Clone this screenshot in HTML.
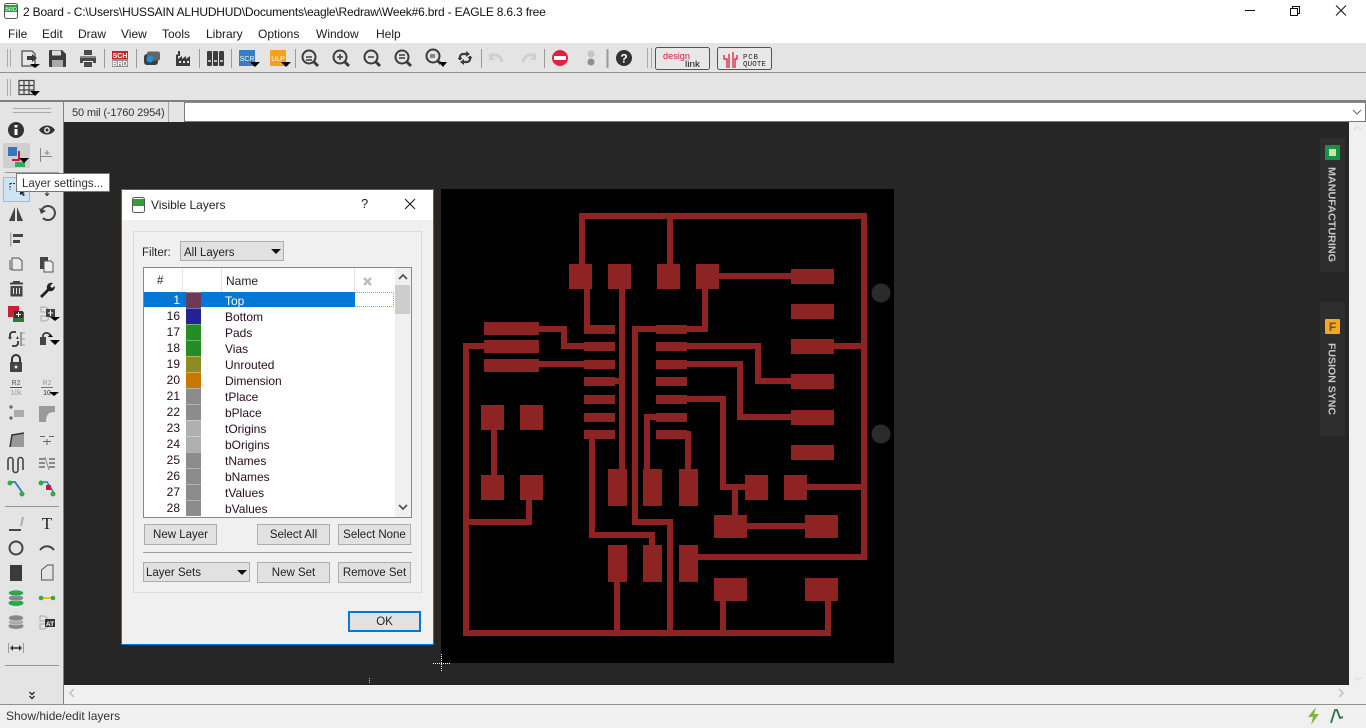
<!DOCTYPE html>
<html><head><meta charset="utf-8"><title>EAGLE</title>
<style>
html,body{margin:0;padding:0;width:1366px;height:728px;overflow:hidden;background:#262626;font-family:"Liberation Sans",sans-serif;font-size:12px;color:#1a1a1a}
.a{position:absolute;box-sizing:border-box}
.t{position:absolute;white-space:nowrap;line-height:16px}
.btn{position:absolute;box-sizing:border-box;background:#e1e1e1;border:1px solid #adadad;text-align:center;line-height:21px;font-size:11.5px;color:#222}
.row{position:absolute;left:144px;width:250px;height:16px;line-height:17px;font-size:12px;color:#2a0a20}
.n{position:absolute;right:214px;top:0}
.s{position:absolute;left:42px;width:15px;height:15px;top:0;border-top:1px solid rgba(255,255,255,.35)}
.l{position:absolute;left:81px;top:1px}
svg{position:absolute;left:0;top:0}
</style></head><body>
<!-- Chrome backgrounds -->
<div class="a" style="left:0;top:0;width:1366px;height:43px;background:#fff"></div>
<div class="a" style="left:0;top:43px;width:1366px;height:30px;background:#e4e4e4;border-bottom:1px solid #8f8f8f"></div>
<div class="a" style="left:0;top:73px;width:1366px;height:29px;background:#e4e4e4;border-bottom:2px solid #7f7f7f"></div>
<div class="a" style="left:0;top:102px;width:64px;height:603px;background:#e4e4e4;border-right:1px solid #7f7f7f"></div>
<div class="a" style="left:64px;top:102px;width:1302px;height:20px;background:#e4e4e4"></div>
<div class="a" style="left:64px;top:102px;width:105px;height:20px;border-right:1px solid #a8a8a8;"></div>
<div class="a" style="left:184px;top:102px;width:1182px;height:20px;background:#fff;border:1px solid #7a7a7a;border-top:1px solid #8a8a8a"></div>
<div class="a" style="left:1349px;top:122px;width:17px;height:563px;background:#f0f0f0"></div>
<div class="a" style="left:64px;top:685px;width:1302px;height:20px;background:#f0f0f0"></div>
<div class="a" style="left:0;top:704px;width:1366px;height:24px;background:#f0f0f0;border-top:1px solid #8f8f8f"></div>

<!-- Titlebar + menu text -->
<div class="t" style="left:23px;top:4px;font-size:12px;letter-spacing:-.19px;color:#111">2 Board - C:\Users\HUSSAIN ALHUDHUD\Documents\eagle\Redraw\Week#6.brd - EAGLE 8.6.3 free</div>
<div class="t" style="left:8px;top:26px">File</div>
<div class="t" style="left:42px;top:26px">Edit</div>
<div class="t" style="left:78px;top:26px">Draw</div>
<div class="t" style="left:121px;top:26px">View</div>
<div class="t" style="left:162px;top:26px">Tools</div>
<div class="t" style="left:206px;top:26px">Library</div>
<div class="t" style="left:258px;top:26px">Options</div>
<div class="t" style="left:316px;top:26px">Window</div>
<div class="t" style="left:376px;top:26px">Help</div>
<div class="t" style="left:72px;top:105px;font-size:11px;letter-spacing:-.15px;color:#333">50 mil (-1760 2954)</div>
<div class="t" style="left:6px;top:708px;color:#333;font-size:12px">Show/hide/edit layers</div>

<!-- Main SVG: PCB and icons -->
<svg width="1366" height="728" viewBox="0 0 1366 728" font-family="'Liberation Sans',sans-serif">
<!-- PCB -->
<rect x="441" y="189" width="453" height="474" fill="#000"/>
<circle cx="881" cy="293" r="9.5" fill="#2b2b2b"/><circle cx="881" cy="434" r="9.5" fill="#2b2b2b"/>
<g shape-rendering="crispEdges">
<path fill="none" stroke="#8e2323" stroke-width="6" stroke-linecap="butt" stroke-linejoin="miter" d="M582 264V216H864V557H698M670 216V264M587 289V329M539 329H564V346H584M539 364H584M484 346H466V633H828V601M622 289V469M615 381H622M656 329H635V522H670V633M656 417H647V469M494 430V475M529 500V522H466M592 439V535H652V545M617 582V633M719 276H791M705 289V329H687M834 346H864M687 346H758V381H791M687 364H740V417H791M687 399H723V487H745M687 434H688V469M807 487H864M735 487V515M747 526H805M723 601V633"/>
<path fill="#8e2323" d="M569 264h23v25h-23zM608 264h23v25h-23zM657 264h23v25h-23zM696 264h23v25h-23zM584 325h31v9h-31zM584 342h31v9h-31zM584 360h31v9h-31zM584 377h31v9h-31zM584 395h31v9h-31zM584 413h31v9h-31zM584 430h31v9h-31zM656 325h31v9h-31zM656 342h31v9h-31zM656 360h31v9h-31zM656 377h31v9h-31zM656 395h31v9h-31zM656 413h31v9h-31zM656 430h31v9h-31zM484 322h55v13h-55zM484 340h55v13h-55zM484 359h55v13h-55zM481 405h23v25h-23zM520 405h23v25h-23zM481 475h23v25h-23zM520 475h23v25h-23zM608 469h19v37h-19zM643 469h19v37h-19zM679 469h19v37h-19zM608 545h19v37h-19zM643 545h19v37h-19zM679 545h19v37h-19zM791 269h43v15h-43zM791 304h43v15h-43zM791 339h43v15h-43zM791 374h43v15h-43zM791 410h43v15h-43zM791 445h43v15h-43zM745 475h23v25h-23zM784 475h23v25h-23zM714 515h33v23h-33zM805 515h33v23h-33zM714 578h33v23h-33zM805 578h33v23h-33z"/>
</g>
<!-- crosshair -->
<path d="M433 663.500h17M441.500 654v18" stroke="#fff" stroke-width="1" stroke-dasharray="1 1" fill="none" shape-rendering="crispEdges"/>
<path d="M369.500 678v5" stroke="#ccc" stroke-dasharray="1 1"/>
<!-- window controls -->
<path d="M1245 10.500h10" stroke="#111"/>
<path d="M1290.500 8.500h7v7h-7zM1292.500 8.500v-2h7v7h-2" fill="none" stroke="#111" shape-rendering="crispEdges"/>
<path d="M1336 5.500l10 10M1346 5.500l-10 10" stroke="#111" fill="none"/>
<path d="M1353 110l4 4 4-4" stroke="#666" fill="none"/>
<!-- app icon -->
<rect x="4.500" y="3.500" width="13" height="15" rx="2" fill="#fff" stroke="#555"/><rect x="5" y="5" width="12" height="7" fill="#2e9e3e"/><text x="11" y="11" font-size="5.500" fill="#fff" text-anchor="middle">BRD</text>
<!-- handles -->
<g stroke="#aaa" shape-rendering="crispEdges"><path d="M7.500 49v18M10.500 49v18M7.500 79v17M10.500 79v17M647.500 48v20M651.500 48v20M13 108.500h38M13 112.500h38"/></g>
<!-- separators -->
<g stroke="#9a9a9a" shape-rendering="crispEdges"><path d="M104.500 49v19M136.500 49v19M199.500 49v19M231.500 49v19M295.500 49v19M481.500 49v19M544.500 49v19"/><path d="M607.500 49v19" stroke-width="2"/><path d="M5 172.500h54M5 506.500h54M5 665.500h54"/></g>
<!-- toolbar 1 -->
<g fill="#3c3c3c">
 <path d="M22 51h10l3 3v12H22z" fill="#e8e8e8" stroke="#666" stroke-width="1.500"/><path d="M27 56h5v-2l5 4-5 4v-2h-5z"/><path d="M30 64h10l-5 4z" fill="#000"/>
 <path d="M50 50h12l4 4v12a1 1 0 0 1-1 1H50a1 1 0 0 1-1-1V51a1 1 0 0 1 1-1z"/><rect x="52" y="50.500" width="9" height="5" fill="#ddd"/><rect x="52" y="60" width="11" height="7" fill="#aaa"/>
 <path d="M84 50h8v5h-8zM80 56h16v7h-3v-2H83v2h-3zM84 62h8v5h-8z" fill="#4a4a4a"/><rect x="80" y="56" width="16" height="2" fill="#888"/>
 <rect x="112" y="51" width="16" height="8" fill="#c1272d"/><rect x="112" y="59" width="16" height="8" fill="#8f8f8f"/><text x="120" y="58" font-size="7" fill="#fff" font-weight="bold" text-anchor="middle">SCH</text><text x="120" y="66" font-size="7" fill="#fff" font-weight="bold" text-anchor="middle">BRD</text>
 <rect x="144" y="54" width="14" height="11" rx="3"/><rect x="147" y="51.500" width="13" height="9" rx="2" fill="#666"/><circle cx="150" cy="59" r="3.500" fill="#1f8fe0"/>
 <path d="M176 66V55l2-1v5l4-3v3l4-3v3l4-3v10z"/><path d="M178 51h2v5h-2z"/><path d="M179 61h2v2h-2zM183 61h2v2h-2zM187 61h2v2h-2z" fill="#e4e4e4"/>
 <rect x="207" y="51" width="5" height="15" rx="1"/><rect x="213" y="51" width="5" height="15" rx="1"/><rect x="219" y="51" width="5" height="15" rx="1"/><path d="M208 60h3v2h-3zM214 60h3v2h-3zM220 60h3v2h-3z" fill="#bbb"/>
 <rect x="239" y="50" width="16" height="16" fill="#3a7cc4"/><text x="247" y="61" font-size="7" fill="#dfe" text-anchor="middle">SCR</text><path d="M250 62h10l-5 5z" fill="#000"/>
 <rect x="270" y="50" width="16" height="16" fill="#f5a11c"/><text x="278" y="61" font-size="7" fill="#fff" text-anchor="middle">ULP</text><path d="M281 62h10l-5 5z" fill="#000"/>
</g>
<g fill="none" stroke="#3c3c3c" stroke-width="2">
 <circle cx="309" cy="57" r="6.500"/><path d="M314 62l4 4" stroke-width="3"/><path d="M306 57h6M306 60h6" stroke-width="1.500"/>
 <circle cx="340" cy="57" r="6.500"/><path d="M345 62l4 4" stroke-width="3"/><path d="M337 57h6M340 54v6" stroke-width="1.500"/>
 <circle cx="371" cy="57" r="6.500"/><path d="M376 62l4 4" stroke-width="3"/><path d="M368 57h6" stroke-width="1.500"/>
 <circle cx="402" cy="57" r="6.500"/><path d="M407 62l4 4" stroke-width="3"/><path d="M399 55h6M399 58h6" stroke-width="1.500"/>
 <circle cx="433" cy="56" r="6.500"/><path d="M438 61l3 3" stroke-width="3"/><rect x="430" y="54" width="5" height="4" fill="#888" stroke="none"/>
 <path d="M460 60v-3a3 3 0 0 1 3-3h4M470 56v3a3 3 0 0 1-3 3h-4" stroke-width="2.200"/>
</g>
<path d="M439 62h8l-4 5z" fill="#000"/>
<path d="M466 51l4 3-4 3zM464 59v6l-4-3zM457.500 59h5l-2.500-3zM467.500 57h5l-2.500 3z" fill="#3c3c3c"/>
<g fill="none" stroke="#cfcfcf" stroke-width="3"><path d="M491 55c5-1 10 1 11 7"/><path d="M534 55c-5-1-10 1-11 7"/></g>
<path d="M489 53v7h6zM536 53v7h-6z" fill="#cfcfcf"/>
<circle cx="560" cy="58" r="8" fill="#e3213f"/><rect x="554" y="56" width="12" height="4" fill="#fff"/>
<circle cx="591" cy="54" r="3.500" fill="#c4c4c4"/><circle cx="591" cy="62" r="3.500" fill="#8f8f8f"/>
<circle cx="624" cy="58" r="8" fill="#333"/><text x="624" y="62.500" font-size="12" font-weight="bold" fill="#fff" text-anchor="middle">?</text>
<!-- design link / pcb quote -->
<rect x="655.500" y="47.500" width="54" height="22" rx="2" fill="#e8e8e8" stroke="#555"/>
<text x="663" y="59" font-size="9.500" fill="#d5143c" textLength="27" lengthAdjust="spacingAndGlyphs">design</text>
<text x="685" y="67" font-size="9.500" fill="#111" textLength="15" lengthAdjust="spacingAndGlyphs">link</text>
<rect x="717.500" y="47.500" width="54" height="22" rx="2" fill="#e8e8e8" stroke="#555"/>
<path d="M724 55v4h3v9M729 54v14M733 52v16M737 55v4h-2v9" stroke="#d5143c" fill="none" stroke-width="1.200"/>
<text x="743" y="59" font-size="7.500" fill="#222" textLength="15" lengthAdjust="spacing" font-family="'Liberation Mono',monospace">PCB</text>
<text x="743" y="66" font-size="7.500" fill="#222" textLength="23" lengthAdjust="spacing" font-family="'Liberation Mono',monospace">QUOTE</text>
<!-- grid -->
<g fill="none" stroke="#444" stroke-width="1.200"><path d="M19 80.500h15v14H19zM19 85.500h15M19 90h15M24 80v15M29 80v15"/></g><path d="M30 91h10l-5 5z" fill="#000"/>
<!-- Left tools -->
<rect x="3" y="143" width="27" height="25" rx="2" fill="#cfcfcf"/>
<rect x="3.500" y="177.500" width="26" height="24" fill="#cde4f7" stroke="#8fc0e8"/>
<g fill="#333">
 <circle cx="16" cy="130" r="8"/><rect x="14.500" y="129" width="3" height="6" fill="#fff"/><rect x="14.500" y="125" width="3" height="2.500" fill="#fff"/>
 <path d="M39 130c4-6 12-6 16 0-4 6-12 6-16 0z"/><circle cx="47" cy="130" r="3" fill="#e4e4e4"/><circle cx="47" cy="130" r="1.500"/>
 <rect x="8" y="147" width="9" height="9" fill="#2f78c2"/><path d="M18 151v8h-6v2h8v-10z" fill="#d5143c"/><path d="M15 162h10v5H15z" fill="#37a85a"/><path d="M19 158h10l-5 5z" fill="#000"/>
</g>
<path d="M40.500 148v14M41 156.500h11M47 150v5M44.500 153h5" stroke="#888" fill="none"/>
<path d="M10 183.500h7M10 183v7" stroke="#333" stroke-dasharray="2 1" fill="none"/><path d="M20 190l5 2-2 1 2 2-2 1-1-2-2 1z" fill="#222"/>
<path d="M47 192v3M45 193.500l2 2 2-2" stroke="#333" fill="none"/>
<g fill="#444">
 <path d="M15 207v14l-6 0zM17 207v14l6 0z"/>
 <path d="M41 212a7 7 0 1 1 2 6" fill="none" stroke="#444" stroke-width="2"/><path d="M39 208l2 6 5-3z"/>
 <path d="M10 232.500h1.500v14H10z" fill="#aaa"/><rect x="13" y="234" width="10" height="3"/><rect x="13" y="240" width="7" height="3"/>
 <path d="M12 258h7l3 3v9H12z" fill="#e8e8e8" stroke="#555"/><path d="M10 260v9h2" fill="none" stroke="#555"/>
 <path d="M40 257h8v4h-8zM40 257h5v12h-5z"/><path d="M44 261h7l2 2v9h-9z" fill="#eee" stroke="#555"/>
 <path d="M10 282.500h13v2H10zM13 281h7v2h-7zM10.500 286h12v10.500h-12z"/><path d="M13.500 288v6M16.500 288v6M19.500 288v6" stroke="#e4e4e4"/>
 <path d="M53 283l-3 3 2 2 3-2c0 4-3 6-6 5l-7 7-2-2 7-7c-1-4 2-7 6-6z" fill="#222"/>
 <rect x="8" y="306" width="11" height="11" fill="#c8202f"/><rect x="13" y="312" width="11" height="10" fill="#2a7a3a"/><rect x="14" y="311" width="9" height="7" fill="#333"/><path d="M18.500 312v5M16 314.500h5" stroke="#fff"/>
 <path d="M41 307h4c3 1 4 3 4 5H41zM41 316h8c0 3-1 4-4 5h-4z" fill="none" stroke="#aaa"/><rect x="46" y="309" width="9" height="8"/><path d="M50.500 310v6M48 313h5" stroke="#fff"/><path d="M50 317h10l-5 4z" fill="#000"/>
 <path d="M16 332h-3a3 3 0 0 0-3 3v2M12 346h3a3 3 0 0 0 3-3v-2" fill="none" stroke="#333" stroke-width="1.800"/><path d="M8 337l4 0-2 3zM19 339l-3 0 1.500-3z"/>
 <path d="M21 332v14" stroke="#999" stroke-width="2"/><path d="M22 333h3M22 339h3M22 345h3" stroke="#999"/>
 <rect x="40" y="337" width="6" height="8"/><path d="M43 337v-2a4 4 0 0 1 7 0l1 2" fill="none" stroke="#333" stroke-width="1.600"/><path d="M48 337l5 0-2.500-3zM50 340h10l-5 5z" fill="#000"/>
 <rect x="10" y="362" width="12" height="10" rx="1"/><path d="M12 362v-3a4 4 0 0 1 8 0v3" fill="none" stroke="#333" stroke-width="2"/><circle cx="16" cy="367" r="1.500" fill="#e4e4e4"/>
</g>
<g font-size="7" fill="#555" text-anchor="middle"><text x="16" y="385">R2</text><path d="M10 387.500h12" stroke="#555"/><text x="16" y="395" fill="#999">10k</text><text x="47" y="385" fill="#999">R2</text><path d="M41 387.500h12" stroke="#777"/><text x="47" y="395" fill="#333">10</text></g>
<path d="M49 392h10l-5 4z" fill="#000"/>
<g fill="#555">
 <rect x="14" y="410" width="10" height="7" fill="#aaa"/><path d="M9 407h4M11 405v4M9 418h4M11 416v4" stroke="#444" fill="none"/>
 <path d="M39 406h16v6c-6 0-9 2-9 10h-7z" fill="#9a9a9a"/>
 <path d="M10 447l2-13h12v13z" fill="#9a9a9a"/><path d="M10 447l2-12 12-2" stroke="#333" fill="none" stroke-width="1.500"/>
 <path d="M40 436.500h5M49 436.500h5M43 441.500h8M47 439v6" stroke="#666" fill="none"/>
 <path d="M9 471v-10a2.500 2.500 0 0 1 5 0v10a2.500 2.500 0 0 0 5 0v-10a2.500 2.500 0 0 1 5 0v10" transform="translate(-1 -1)" fill="none" stroke="#444" stroke-width="1.600"/>
 <path d="M39 459h6M39 463h6M39 467h6M49 459h6M49 463h6M49 467h6" stroke="#555" fill="none" stroke-width="1.300"/><path d="M45 457l4 13" stroke="#888" fill="none"/>
 <path d="M10 482h5l7 10" fill="none" stroke="#2f78c2" stroke-width="1.800"/><circle cx="10" cy="483" r="2.500" fill="#3aa83a"/><circle cx="22" cy="494" r="2.500" fill="#3aa83a"/>
 <path d="M41 482h6l7 11" fill="none" stroke="#2f78c2" stroke-width="1.500"/><circle cx="41" cy="483" r="2.500" fill="#3aa83a"/><circle cx="53" cy="494" r="2.500" fill="#3aa83a"/><rect x="46" y="485" width="5" height="5" fill="#d5143c"/>
 <path d="M9 530h12" stroke="#111" stroke-width="1.500"/><path d="M20 526l2-9 2 0-2 9z" fill="#aaa"/>
</g>
<text x="47" y="529" font-family="'Liberation Serif',serif" font-size="17" fill="#222" text-anchor="middle">T</text>
<circle cx="16" cy="548" r="6.500" fill="none" stroke="#444" stroke-width="2"/>
<path d="M40 550c4-5 10-5 14 0" fill="none" stroke="#444" stroke-width="2"/>
<rect x="10" y="565" width="12" height="16" fill="#3a3a3a"/>
<path d="M41.500 580v-10l6-5h5.500v15z" fill="none" stroke="#555"/>
<ellipse cx="16" cy="603" rx="7.500" ry="3" fill="#2aa84a"/><ellipse cx="16" cy="598" rx="7.500" ry="3" fill="#888" stroke="#e4e4e4" stroke-width=".6"/><ellipse cx="16" cy="593" rx="7.500" ry="3" fill="#2aa84a" stroke="#e4e4e4" stroke-width=".6"/>
<path d="M41 598h12" stroke="#f0c000" stroke-width="2"/><circle cx="41" cy="598" r="2.300" fill="#3aa83a"/><circle cx="53" cy="598" r="2.300" fill="#3aa83a"/>
<ellipse cx="16" cy="626" rx="7.500" ry="3" fill="#888"/><ellipse cx="16" cy="622" rx="7.500" ry="3" fill="#aaa" stroke="#e4e4e4" stroke-width=".6"/><ellipse cx="16" cy="618" rx="7.500" ry="3" fill="#888" stroke="#e4e4e4" stroke-width=".6"/>
<path d="M40 616h4c3 1 4 3 4 5H40zM40 624h8c0 3-1 4-4 5h-4z" fill="none" stroke="#aaa"/><rect x="45" y="619" width="10" height="8" fill="#333"/><text x="50" y="626" font-size="6.500" fill="#fff" text-anchor="middle" font-weight="bold">AT</text>
<path d="M8.500 643v10M23.500 643v10" stroke="#999"/><path d="M11 648h10" stroke="#333" stroke-width="1.500"/><path d="M10 648l3-3v6zM22 648l-3-3v6z" fill="#333"/>
<path d="M29.500 692l2.500 2.500 2.500-2.500M29.500 696l2.500 2.500 2.500-2.500" fill="none" stroke="#111" stroke-width="1.200"/>
<!-- scrollbars -->
<path d="M74 689l-4 4 4 4M1339 689l4 4-4 4" fill="none" stroke="#c0c0c0" stroke-width="1.500"/>
<path d="M1354 130l3.500-3.500 3.500 3.500" fill="none" stroke="#ddd" stroke-width="1.200"/>
<path d="M1354 677l3.500 3.500 3.500-3.500" fill="none" stroke="#ddd" stroke-width="1.200"/>
<!-- right side tabs -->
<rect x="1320" y="138" width="25" height="134" fill="#2e2e2e"/>
<rect x="1320" y="302" width="25" height="134" fill="#2e2e2e"/>
<rect x="1325" y="145" width="15" height="15" rx="1" fill="#17924a"/><rect x="1329" y="149" width="7" height="7" fill="#cfe3a5"/>
<rect x="1325" y="319" width="15" height="15" rx="1" fill="#f5a81c"/><text x="1332.500" y="331" font-size="12" font-weight="bold" fill="#555" text-anchor="middle">F</text>
<text transform="translate(1328.500 167) rotate(90)" font-size="10.500" font-weight="bold" fill="#c9c9c9" textLength="95" lengthAdjust="spacingAndGlyphs">MANUFACTURING</text>
<text transform="translate(1328.500 343) rotate(90)" font-size="10.500" font-weight="bold" fill="#c9c9c9" textLength="72" lengthAdjust="spacingAndGlyphs">FUSION SYNC</text>
<!-- status icons -->
<path d="M1316 707l-8 10h5l-2 8 8-11h-5z" fill="#7ab648"/>
<path d="M1331 723l4-13 2 0 3 8 3-1" fill="none" stroke="#2d6e4e" stroke-width="1.800"/>
</svg>

<!-- Dialog -->
<div class="a" style="left:121px;top:189px;width:313px;height:456px;background:#f0f0f0;border:1px solid #0078d7">
 <div class="a" style="left:0;top:0;width:311px;height:30px;background:#fff"></div>
</div>
<div class="t" style="left:151px;top:197px;color:#222">Visible Layers</div>
<div class="t" style="left:361px;top:196px;font-size:13px;color:#222">?</div>
<div class="a" style="left:133px;top:231px;width:289px;height:362px;border:1px solid #dcdcdc"></div>
<div class="t" style="left:142px;top:245px;font-size:11.500px;color:#222">Filter:</div>
<div class="a" style="left:180px;top:241px;width:104px;height:20px;background:#e1e1e1;border:1px solid #adadad"></div>
<div class="t" style="left:184px;top:245px;font-size:11.500px;color:#222">All Layers</div>

<div class="a" style="left:143px;top:267px;width:269px;height:251px;background:#fff;border:1px solid #828790;overflow:hidden"></div>
<div class="a" style="left:395px;top:268px;width:16px;height:249px;background:#f0f0f0"></div>
<div class="a" style="left:395px;top:285px;width:15px;height:29px;background:#cdcdcd"></div>
<div class="a" style="left:182px;top:268px;width:1px;height:24px;background:#e4e4e4"></div>
<div class="a" style="left:221px;top:268px;width:1px;height:24px;background:#e4e4e4"></div>
<div class="a" style="left:354px;top:268px;width:1px;height:24px;background:#e4e4e4"></div>
<div class="t" style="left:157px;top:273px;font-size:11.500px;color:#222">#</div>
<div class="t" style="left:226px;top:273px;color:#222">Name</div>

<div class="a" style="left:144px;top:292px;width:250px;height:15px;border:1px dotted #e8943c"></div>
<div class="a" style="left:144px;top:292px;width:211px;height:15px;background:#0078d7"></div>
<div class="row" style="top:292px;color:#fff"><span class="n" style="color:#fff">1</span><span class="s" style="background:#6b3a56"></span><span class="l" style="color:#fff">Top</span></div>
<div class="row" style="top:308px"><span class="n">16</span><span class="s" style="background:#23238f"></span><span class="l">Bottom</span></div>
<div class="row" style="top:324px"><span class="n">17</span><span class="s" style="background:#238c23"></span><span class="l">Pads</span></div>
<div class="row" style="top:340px"><span class="n">18</span><span class="s" style="background:#238c23"></span><span class="l">Vias</span></div>
<div class="row" style="top:356px"><span class="n">19</span><span class="s" style="background:#8c8c23"></span><span class="l">Unrouted</span></div>
<div class="row" style="top:372px"><span class="n">20</span><span class="s" style="background:#c87800"></span><span class="l">Dimension</span></div>
<div class="row" style="top:388px"><span class="n">21</span><span class="s" style="background:#8c8c8c"></span><span class="l">tPlace</span></div>
<div class="row" style="top:404px"><span class="n">22</span><span class="s" style="background:#8c8c8c"></span><span class="l">bPlace</span></div>
<div class="row" style="top:420px"><span class="n">23</span><span class="s" style="background:#b0b0b0"></span><span class="l">tOrigins</span></div>
<div class="row" style="top:436px"><span class="n">24</span><span class="s" style="background:#b0b0b0"></span><span class="l">bOrigins</span></div>
<div class="row" style="top:452px"><span class="n">25</span><span class="s" style="background:#8c8c8c"></span><span class="l">tNames</span></div>
<div class="row" style="top:468px"><span class="n">26</span><span class="s" style="background:#8c8c8c"></span><span class="l">bNames</span></div>
<div class="row" style="top:484px"><span class="n">27</span><span class="s" style="background:#8c8c8c"></span><span class="l">tValues</span></div>
<div class="row" style="top:500px"><span class="n">28</span><span class="s" style="background:#8c8c8c"></span><span class="l">bValues</span></div>

<div class="btn" style="left:144px;top:524px;width:73px;height:21px">New Layer</div>
<div class="btn" style="left:257px;top:524px;width:73px;height:21px">Select All</div>
<div class="btn" style="left:338px;top:524px;width:73px;height:21px">Select None</div>
<div class="a" style="left:143px;top:552px;width:269px;height:1px;background:#a0a0a0"></div>
<div class="btn" style="left:143px;top:562px;width:107px;height:20px;text-align:left;padding-left:2px">Layer Sets</div>
<div class="btn" style="left:257px;top:562px;width:73px;height:21px">New Set</div>
<div class="btn" style="left:338px;top:562px;width:73px;height:21px">Remove Set</div>
<div class="btn" style="left:348px;top:611px;width:73px;height:21px;border:2px solid #0078d7;line-height:19px">OK</div>

<svg width="1366" height="728" viewBox="0 0 1366 728" style="pointer-events:none">
<rect x="132.500" y="197.500" width="12" height="15" rx="2" fill="#fff" stroke="#555"/><rect x="133" y="199" width="11" height="7" fill="#2e9e3e"/>
<path d="M405 199l10 10M415 199l-10 10" stroke="#111" fill="none"/>
<path d="M271 249h10l-5 5z" fill="#111"/><path d="M237 570h10l-5 5z" fill="#111"/>
<path d="M399 279l4-4 4 4M399 505l4 4 4-4" stroke="#555" stroke-width="1.800" fill="none"/>
<path d="M364 278l7 7M371 278l-7 7" stroke="#bbb" stroke-width="2.500" fill="none"/>
<!-- tooltip on top -->
<rect x="16.500" y="173.500" width="93" height="18" fill="#fff" stroke="#777"/>
<text x="22" y="187" font-size="11.500" fill="#333" font-family="'Liberation Sans',sans-serif">Layer settings...</text>
</svg>
</body></html>
